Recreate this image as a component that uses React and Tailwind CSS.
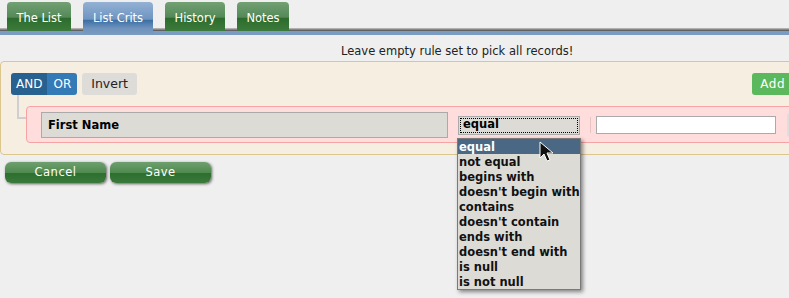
import React from "react";

const tabs = [
  { label: "The List", w: "w-[64px]" },
  { label: "List Crits", w: "w-[70px]", active: true },
  { label: "History", w: "w-[60px]" },
  { label: "Notes", w: "w-[52px]" },
];

const operators = [
  "equal",
  "not equal",
  "begins with",
  "doesn't begin with",
  "contains",
  "doesn't contain",
  "ends with",
  "doesn't end with",
  "is null",
  "is not null",
];

function Tab({ label, w, active }) {
  return (
    <div
      className={
        active
          ? `${w} relative z-10 h-[33px] rounded-t-[4px] text-white flex items-start pt-[8px] justify-center bg-[linear-gradient(to_bottom,#93b1d3,#6f95c1_52%,#3d70a6_56%,#6f93bc_80%,#7a9cc0)]`
          : `${w} h-[29px] rounded-t-[4px] text-white flex items-start pt-[8px] justify-center bg-[linear-gradient(to_bottom,#72a072,#55895a_52%,#2b6b2b_57%,#337333_75%,#3d7a3d)]`
      }
    >
      {label}
    </div>
  );
}

function GreenButton({ children }) {
  return (
    <button className="w-[101px] h-[21px] rounded-[6px] text-white text-[11.5px] tracking-[0.5px] shadow-[1px_1px_3px_rgba(0,0,0,0.6)] bg-[linear-gradient(to_bottom,#6f9f6f,#4f8a4f_50%,#2d6d2d_55%,#3a7a3a)]">
      {children}
    </button>
  );
}

function Cursor() {
  return (
    <svg className="absolute left-[539px] top-[141px]" width="16" height="22" viewBox="0 0 16 22">
      <path d="M1 1 L1 17 L5 13 L8 20 L11 19 L8 12 L14 12 Z" fill="#111" stroke="#fff" strokeWidth="1" />
    </svg>
  );
}

export default function App() {
  return (
    <div className="relative w-[789px] h-[298px] overflow-hidden bg-[#efefef] font-['DejaVu_Sans',sans-serif] text-[11.5px] text-black">
      {/* tab strip */}
      <div className="h-[31px] pt-[2px] pl-[7px] flex gap-[12px] items-start bg-[linear-gradient(to_bottom,#efefef_28px,#c4c4c4_28px,#4c4c4c_31px)]">
        {tabs.map(t => (
          <Tab key={t.label} {...t} />
        ))}
      </div>
      <div className="h-[4px] bg-[#7a9cc0]" />

      <div className="h-[26px] pl-[341px] pt-[8px] text-[#222]">Leave empty rule set to pick all records!</div>

      {/* rule group */}
      <div className="w-[920px] border border-[#dcc690] rounded-[4px] bg-[#f6eee0] pt-[11px] pl-[10px] pr-[10px] pb-[11px]">
        <div className="flex items-center">
          <div className="flex h-[22px] rounded-[3px] overflow-hidden text-white text-[12px]">
            <span className="px-[5px] flex items-center bg-[#286090]">AND</span>
            <span className="px-[6px] flex items-center bg-[#337ab7]">OR</span>
          </div>
          <span className="ml-[5px] h-[22px] px-[9px] flex items-center rounded-[3px] bg-[#dddcd8] text-[12.5px] text-[#222]">Invert</span>
          <div className="ml-auto flex gap-[4px]">
            <span className="h-[22px] px-[8px] flex items-center rounded-[3px] bg-[#5cb85c] text-white text-[12px] tracking-[0.5px]">Add rule</span>
            <span className="h-[22px] px-[8px] flex items-center rounded-[3px] bg-[#5cb85c] text-white text-[12px] tracking-[0.5px]">Add group</span>
          </div>
        </div>

        <div className="relative mt-[11px] ml-[15px] h-[37px] border border-[#f5a3a3] rounded-[4px] bg-[#ffdddd] pl-[14px] flex items-center">
          <div className="absolute -left-[10px] -top-[12px] w-[9px] h-[24px] border-l-2 border-b-2 border-[#cfcfcf]" />
          <div className="w-[407px] h-[26px] mt-[1px] border border-[#aaa] bg-[#dcdbd6] pl-[6px] pt-[1px] flex items-center font-bold">First Name</div>
          <div className="ml-[10px] w-[122px] h-[19px] mt-[1px] border border-[#aaa] bg-[#dcdbd6] p-[1px]">
            <div className="h-full border border-dotted border-black pl-[2px] flex items-center font-bold">equal</div>
          </div>
          <div className="ml-[10px] w-px h-[16px] bg-[#e6c4c4]" />
          <div className="ml-[5px] w-[180px] h-[18px] mt-[1px] border border-[#aaa] bg-white" />
          <div className="ml-[11px] w-[20px] h-[24px] rounded-[3px] bg-[#ddd]" />
        </div>
      </div>

      <div className="mt-[7px] pl-[5px] flex gap-[4px]">
        <GreenButton>Cancel</GreenButton>
        <GreenButton>Save</GreenButton>
      </div>

      {/* open select list */}
      <div className="absolute left-[457px] top-[138px] w-[124px] border border-[#7a7a7a] bg-[#dcdbd6] shadow-[2px_2px_4px_rgba(0,0,0,0.45)] font-bold">
        {operators.map((op, i) => (
          <div key={op} className={`h-[15px] leading-[16px] pl-[1px] whitespace-nowrap ${i === 0 ? "bg-[#4a6884] text-white" : "text-[#111]"}`}>
            {op}
          </div>
        ))}
      </div>
      <Cursor />
    </div>
  );
}
